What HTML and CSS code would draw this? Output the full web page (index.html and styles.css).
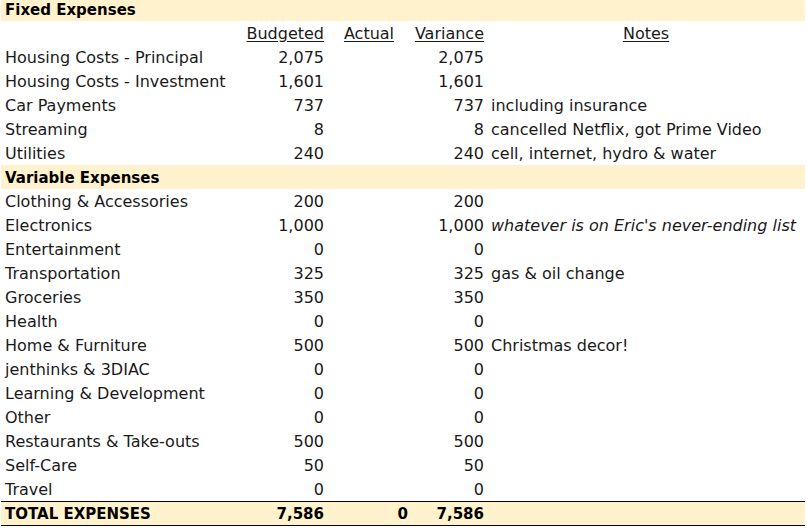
FILE: index.html
```html
<!DOCTYPE html>
<html>
<head>
<meta charset="utf-8">
<link rel="stylesheet" href="styles.css">
</head>
<body>
<table class="sheet">
  <colgroup>
    <col class="c-label"><col class="c-bud"><col class="c-act"><col class="c-var"><col class="c-notes">
  </colgroup>
  <tr class="section first"><td colspan="5">Fixed Expenses</td></tr>
  <tr class="heads"><td></td><td class="num"><u>Budgeted</u></td><td class="ctr"><u>Actual</u></td><td class="num"><u>Variance</u></td><td class="ctr"><u>Notes</u></td></tr>
  <tr><td>Housing Costs - Principal</td><td class="num">2,075</td><td></td><td class="num">2,075</td><td class="note"></td></tr>
  <tr><td>Housing Costs - Investment</td><td class="num">1,601</td><td></td><td class="num">1,601</td><td class="note"></td></tr>
  <tr><td>Car Payments</td><td class="num">737</td><td></td><td class="num">737</td><td class="note">including insurance</td></tr>
  <tr><td>Streaming</td><td class="num">8</td><td></td><td class="num">8</td><td class="note">cancelled Netflix, got Prime Video</td></tr>
  <tr><td>Utilities</td><td class="num">240</td><td></td><td class="num">240</td><td class="note">cell, internet, hydro &amp; water</td></tr>
  <tr class="section"><td colspan="5">Variable Expenses</td></tr>
  <tr><td>Clothing &amp; Accessories</td><td class="num">200</td><td></td><td class="num">200</td><td class="note"></td></tr>
  <tr><td>Electronics</td><td class="num">1,000</td><td></td><td class="num">1,000</td><td class="note"><i>whatever is on Eric's never-ending list</i></td></tr>
  <tr><td>Entertainment</td><td class="num">0</td><td></td><td class="num">0</td><td class="note"></td></tr>
  <tr><td>Transportation</td><td class="num">325</td><td></td><td class="num">325</td><td class="note">gas &amp; oil change</td></tr>
  <tr><td>Groceries</td><td class="num">350</td><td></td><td class="num">350</td><td class="note"></td></tr>
  <tr><td>Health</td><td class="num">0</td><td></td><td class="num">0</td><td class="note"></td></tr>
  <tr><td>Home &amp; Furniture</td><td class="num">500</td><td></td><td class="num">500</td><td class="note">Christmas decor!</td></tr>
  <tr><td>jenthinks &amp; 3DIAC</td><td class="num">0</td><td></td><td class="num">0</td><td class="note"></td></tr>
  <tr><td>Learning &amp; Development</td><td class="num">0</td><td></td><td class="num">0</td><td class="note"></td></tr>
  <tr><td>Other</td><td class="num">0</td><td></td><td class="num">0</td><td class="note"></td></tr>
  <tr><td>Restaurants &amp; Take-outs</td><td class="num">500</td><td></td><td class="num">500</td><td class="note"></td></tr>
  <tr><td>Self-Care</td><td class="num">50</td><td></td><td class="num">50</td><td class="note"></td></tr>
  <tr><td>Travel</td><td class="num">0</td><td></td><td class="num">0</td><td class="note"></td></tr>
  <tr class="total"><td>TOTAL EXPENSES</td><td class="num">7,586</td><td class="num">0</td><td class="num">7,586</td><td class="note"></td></tr>
</table>
</body>
</html>
```
FILE: styles.css
```css
html, body {
  margin: 0;
  padding: 0;
  background: #fff;
}
body {
  font-family: "DejaVu Sans", sans-serif;
  font-size: 16px;
  color: #1a1a1a;
}
.sheet {
  border-collapse: collapse;
  table-layout: fixed;
  width: 804px;
  margin-left: 1px;
}
.c-label { width: 234px; }
.c-bud { width: 92px; }
.c-act { width: 84px; }
.c-var { width: 76px; }
.c-notes { width: 318px; }
.sheet td {
  height: 22px;
  padding: 2px 0 0 4px;
  white-space: nowrap;
  overflow: hidden;
  line-height: 22px;
  vertical-align: middle;
}
.sheet td.num {
  text-align: right;
  padding: 2px 3px 0 0;
}
.sheet td.ctr {
  text-align: center;
  padding: 2px 0 0 0;
}
.sheet td.note {
  padding-left: 4px;
}
.section td {
  background: #fff2cc;
  font-weight: bold;
  font-size: 15px;
  color: #000;
}
.section.first td {
  height: 21px;
  padding-top: 0;
  line-height: 20px;
  vertical-align: top;
}
.total td {
  background: #fff2cc;
  font-weight: bold;
  font-size: 15px;
  color: #000;
  border-top: 1px solid #000;
  border-bottom: 1px solid #000;
  height: 22px;
  padding-top: 1px;
  line-height: 22px;
}
.total td.num {
  padding-top: 1px;
}
u {
  text-decoration: underline;
  text-underline-offset: 2px;
}
```
